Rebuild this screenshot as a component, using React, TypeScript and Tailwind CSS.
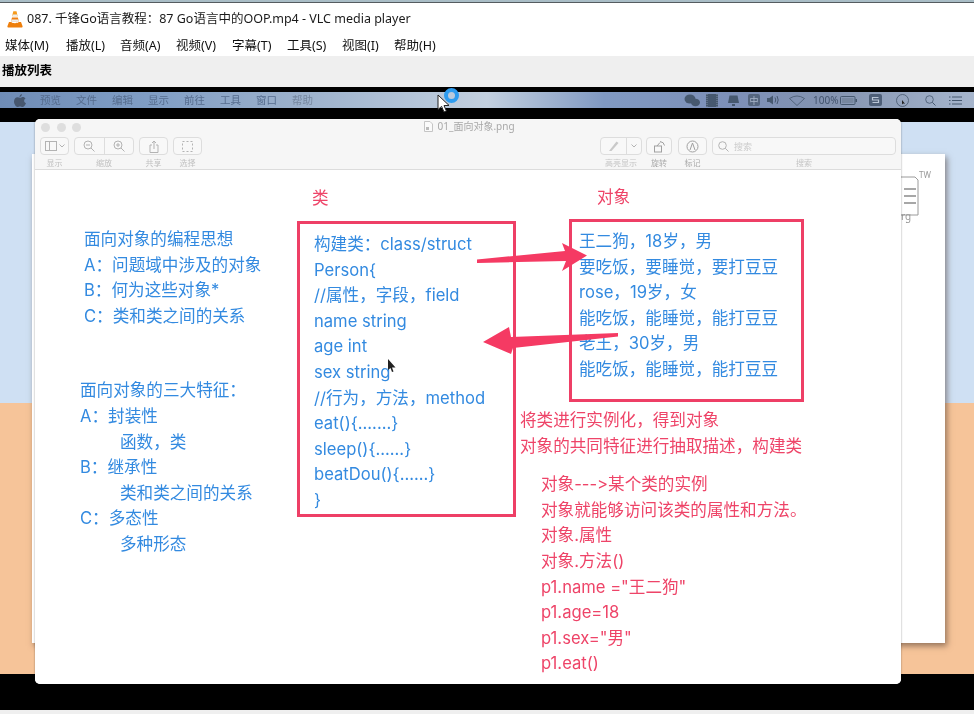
import React from "react";

const cjk = "font-['Inter','Noto_Sans_CJK_SC',sans-serif]";

function Cone() {
  return (
    <svg width="16" height="18" viewBox="0 0 16 18" className="shrink-0">
      <path d="M6.3 1.2 h3.2 l1.2 5 h-5.6z" fill="#f59a1c" />
      <path d="M5.7 4.6 h4.5 l.5 2 h-5.5z" fill="#eeeeee" />
      <path d="M5 7.4 h5.9 l1 4.2 H4z" fill="#f07f10" />
      <path d="M4.6 9.4 h6.7 l.6 2.4 H4z" fill="#eeeeee" />
      <path d="M2 12 h2.2 c1 1.6 6.4 1.6 7.6 0 H14 l1.6 4.2 c0 1-.4 1.3-1.2 1.3 H1.6 c-.8 0-1.2-.3-1.2-1.3z" fill="#ee7f0c" />
    </svg>
  );
}

function Cursor() {
  return (
    <svg width="14" height="20" viewBox="0 0 14 20" className="absolute left-[437px] top-[7px] z-20">
      <path d="M1 1 L1 15.5 L4.6 12.4 L7 18 L9.4 17 L7 11.6 L12 11.4 Z" fill="#fff" stroke="#222" strokeWidth="1" />
    </svg>
  );
}

function MacIcons() {
  const c = "#46586f";
  return (
    <div className="flex items-center">
      <svg width="16" height="13" viewBox="0 0 16 13" className="ml-0"><ellipse cx="6" cy="5" rx="5.5" ry="4.5" fill={c} /><ellipse cx="11.5" cy="8.5" rx="4.5" ry="3.8" fill={c} /></svg>
      <svg width="12" height="13" viewBox="0 0 12 13" className="ml-[6px]"><rect width="12" height="13" fill={c} /><path d="M1 0v13M11 0v13" stroke="#7d8ca5" strokeDasharray="1 1" /></svg>
      <svg width="13" height="12" viewBox="0 0 13 12" className="ml-[9px]"><path d="M1 9 L2.5 1.5 h8 L12 9z" fill={c} /><rect x="5" y="10" width="3" height="2" fill={c} /></svg>
      <span className="ml-[8px] flex h-[12px] w-[12px] items-center justify-center rounded-[2px] bg-[#55667f] text-[9px] leading-none text-[#a9b6ca]">中</span>
      <svg width="12" height="10" viewBox="0 0 12 10" className="ml-[7px]"><path d="M0 3h2.5L6 .5v9L2.5 7H0z" fill={c} /><path d="M8 2.5q1.5 2.5 0 5M10 1q2.4 4 0 8" stroke={c} fill="none" /></svg>
      <svg width="16" height="11" viewBox="0 0 16 11" className="ml-[10px]"><path d="M.5 3.5 Q8-1.5 15.5 3.5 L8 10.5z" fill="none" stroke={c} strokeWidth=".8" /></svg>
      <span className="ml-[8px] w-[24px] text-[10px] leading-none text-[#42536d]">100%</span>
      <svg width="17" height="9" viewBox="0 0 17 9" className="ml-[3px]"><rect x=".5" y=".5" width="14.5" height="8" rx="1" fill="none" stroke={c} /><rect x="15.5" y="3" width="1.5" height="3" fill={c} /><rect x="2" y="2" width="11.5" height="5" fill="#77879f" /></svg>
      <svg width="13" height="12" viewBox="0 0 13 12" className="ml-[12px]"><rect width="13" height="12" rx="2" fill="#4e5f78" /><path d="M9.5 3.5h-6v2.5h6v2.5h-6" stroke="#b9c5d6" strokeWidth="1.2" fill="none" /></svg>
      <svg width="13" height="13" viewBox="0 0 13 13" className="ml-[14px]"><circle cx="6.5" cy="6.5" r="6" fill="none" stroke={c} strokeWidth=".8" /><path d="M6 6 v4.5 l1-1 2 .2z" fill="#222" /></svg>
      <svg width="11" height="11" viewBox="0 0 11 11" className="ml-[16px]"><circle cx="4.5" cy="4.5" r="3.8" fill="none" stroke={c} strokeWidth=".8" /><path d="M7.3 7.3 L10.5 10.5" stroke={c} /></svg>
      <svg width="13" height="9" viewBox="0 0 13 9" className="ml-[13px]"><path d="M3 1h10M3 4.500h10M3 8h10" stroke={c} /><path d="M0 1h1.500M0 4.500h1.500M0 8h1.500" stroke={c} /></svg>
    </div>
  );
}

function Tool({ w, children }: { w: string; children: React.ReactNode }) {
  return (
    <div className={`flex h-[18px] items-center justify-center rounded-[4px] border border-[#dddddd] bg-[#f8f8f8] ${w}`}>
      {children}
    </div>
  );
}

const s = { fill: "none", stroke: "#b3b3b3", strokeWidth: 1 };

function Toolbar() {
  return (
    <div className="relative h-[51px] shrink-0 border-b border-[#dcdcdc] bg-[#f6f6f6]">
      <div className="flex h-[13px] items-end gap-[6.500px] pl-[6px]">
        <span className="h-[9px] w-[9px] rounded-full bg-[#dedede]" />
        <span className="h-[9px] w-[9px] rounded-full bg-[#dedede]" />
        <span className="h-[9px] w-[9px] rounded-full bg-[#dedede]" />
        <div className="ml-[336px] flex items-center gap-[5px]">
          <svg width="9" height="11" viewBox="0 0 9 11"><path d="M.5.5h5.500l2.500 2.500v7.500h-8z" fill="#fafafa" stroke="#c5c5c5" /><rect x="2" y="6" width="3" height="3" fill="#bbbbbb" /></svg>
          <span className="text-[10px] leading-[11px] text-[#a8a8a8]">01_面向对象.png</span>
        </div>
      </div>
      <div className="flex pt-[5px]">
        <div className="ml-[5px] flex flex-col">
          <div className="flex gap-[5px] pt-[0px]">
            <Tool w="w-[29px] gap-[2px]">
              <svg width="12" height="10" viewBox="0 0 12 10"><rect x=".5" y=".5" width="11" height="9" {...s} /><path d="M4.500.5v9" {...s} /></svg>
              <svg width="6" height="4" viewBox="0 0 6 4"><path d="M.5.5 3 3 5.500.5" {...s} /></svg>
            </Tool>
            <div className="flex h-[18px] w-[60px] rounded-[4px] border border-[#dddddd] bg-[#f8f8f8]">
              <div className="flex flex-1 items-center justify-center border-r border-[#dddddd]">
                <svg width="12" height="12" viewBox="0 0 12 12"><circle cx="5" cy="5" r="4" {...s} /><path d="M8 8l3.500 3.500M3 5h4" {...s} /></svg>
              </div>
              <div className="flex flex-1 items-center justify-center">
                <svg width="12" height="12" viewBox="0 0 12 12"><circle cx="5" cy="5" r="4" {...s} /><path d="M8 8l3.500 3.500M3 5h4M5 3v4" {...s} /></svg>
              </div>
            </div>
            <Tool w="w-[29px]">
              <svg width="10" height="13" viewBox="0 0 10 13"><path d="M3 5H1v7.500h8V5H7M5 9V1M3 3l2-2 2 2" {...s} /></svg>
            </Tool>
            <Tool w="w-[29px]">
              <svg width="11" height="11" viewBox="0 0 11 11"><rect x=".5" y=".5" width="10" height="10" {...s} strokeDasharray="2 2" /></svg>
            </Tool>
          </div>
          <div className="flex gap-[5px] pt-[2px] text-center text-[8px] leading-[12px] text-[#c0c0c0]">
            <span className="w-[29px]">显示</span>
            <span className="w-[60px]">缩放</span>
            <span className="w-[29px]">共享</span>
            <span className="w-[29px]">选择</span>
          </div>
        </div>
        <div className="ml-[398px] flex flex-col">
          <div className="flex">
            <div className="flex h-[18px] w-[42px] rounded-[4px] border border-[#dddddd] bg-[#f8f8f8]">
              <div className="flex w-[26px] items-center justify-center border-r border-[#dddddd]">
                <svg width="12" height="12" viewBox="0 0 12 12"><path d="M1 11 L8.500 1.500 L10.500 3 L3.500 11z" fill="#c9c9c9" /></svg>
              </div>
              <div className="flex flex-1 items-center justify-center">
                <svg width="6" height="4" viewBox="0 0 6 4"><path d="M.5.5 3 3 5.500.5" {...s} /></svg>
              </div>
            </div>
            <div className="ml-[4px]">
              <Tool w="w-[26px]">
                <svg width="13" height="13" viewBox="0 0 13 13"><rect x="1.500" y="6" width="7" height="6" fill="none" stroke="#a0a0a0" /><path d="M4 6 L7 2.500M7 1.500q4 .5 4.500 4" fill="none" stroke="#a0a0a0" /></svg>
              </Tool>
            </div>
            <div className="ml-[6px]">
              <Tool w="w-[29px]">
                <svg width="13" height="13" viewBox="0 0 13 13"><circle cx="6.500" cy="6.500" r="5.500" fill="none" stroke="#a0a0a0" /><path d="M4 10 L6.500 3 L9 10" fill="none" stroke="#a0a0a0" /></svg>
              </Tool>
            </div>
            <div className="ml-[5px] flex h-[18px] w-[184px] items-center gap-[5px] rounded-[4px] border border-[#dddddd] bg-[#f8f8f8] pl-[5px]">
              <svg width="11" height="11" viewBox="0 0 11 11"><circle cx="4.500" cy="4.500" r="3.800" {...s} /><path d="M7.300 7.300l3.200 3.200" {...s} /></svg>
              <span className="text-[9px] leading-none text-[#cccccc]">搜索</span>
            </div>
          </div>
          <div className="flex pt-[2px] text-center text-[8px] leading-[12px] text-[#c4c4c4]">
            <span className="w-[42px]">高亮显示</span>
            <span className="ml-[4px] w-[26px] text-[#aaaaaa]">旋转</span>
            <span className="ml-[6px] w-[29px] text-[#aaaaaa]">标记</span>
            <span className="ml-[5px] w-[184px]">搜索</span>
          </div>
        </div>
      </div>
    </div>
  );
}

function Lines({ items, className = "" }: { items: React.ReactNode[]; className?: string }) {
  return (
    <div className={`whitespace-pre text-[16.6px] leading-[25.6px] ${className}`}>
      {items.map((t, i) => (
        <div key={i}>{t}</div>
      ))}
    </div>
  );
}

function Canvas() {
  return (
    <div className={`relative flex flex-1 bg-white [font-feature-settings:'calt'_0,'liga'_0] ${cjk}`}>
      <div className="ml-[45px] mt-[57px] w-[217px] text-[#338ae0]">
        <Lines
          className="ml-[4px]"
          items={["面向对象的编程思想", "A：问题域中涉及的对象", "B：何为这些对象*", "C：类和类之间的关系"]}
        />
        <Lines
          className="mt-[49px]"
          items={[
            "面向对象的三大特征：",
            "A：封装性",
            <span className="pl-[40px]">函数，类</span>,
            "B：继承性",
            <span className="pl-[40px]">类和类之间的关系</span>,
            "C：多态性",
            <span className="pl-[40px]">多种形态</span>,
          ]}
        />
      </div>
      <div className="w-[272px]">
        <div className="ml-[15px] mt-[17px] text-[16.6px] leading-[22px] text-[#ee4468]">类</div>
        <div className="mt-[12px] h-[296px] w-[219px] border-[3px] border-[#ee3f66] pl-[14px] pt-[8px] text-[#338ae0]">
          <Lines
            items={["构建类：class/struct", "Person{", "//属性，字段，field", "name string", "age int", "sex string", "//行为，方法，method", "eat(){.......}", "sleep(){......}", "beatDou(){......}", "}"]}
          />
        </div>
      </div>
      <div>
        <div className="ml-[28px] mt-[16px] text-[16.6px] leading-[22px] text-[#ee4468]">对象</div>
        <div className="mt-[11px] h-[183px] w-[235px] border-[3px] border-[#ee3f66] pl-[7px] pt-[7px] text-[#338ae0]">
          <Lines
            items={["王二狗，18岁，男", "要吃饭，要睡觉，要打豆豆", "rose，19岁，女", "能吃饭，能睡觉，能打豆豆", "老王，30岁，男", "能吃饭，能睡觉，能打豆豆"]}
          />
        </div>
        <div className="-ml-[49px] mt-[6px] text-[#ee4468]">
          <Lines items={["将类进行实例化，得到对象", "对象的共同特征进行抽取描述，构建类"]} />
          <Lines
            className="ml-[21px] mt-[13px]"
            items={["对象--->某个类的实例", "对象就能够访问该类的属性和方法。", "对象.属性", "对象.方法()", 'p1.name ="王二狗"', "p1.age=18", 'p1.sex="男"', "p1.eat()"]}
          />
        </div>
      </div>
      <svg className="absolute inset-0" width="866" height="513" viewBox="35 171 866 513">
        <polygon points="477,260.500 565,252 562,244 587,256.500 562,272 566,262 477,264" fill="#f53a63" />
        <polygon points="618,334 618,337.500 513,349 511,355 483,343 509,328 511,338" fill="#f53a63" />
        <path d="M388 360 L388 371 L390.500 369 L392 373 L393.500 372.400 L392 368.500 L395.500 368.500 Z" fill="#222222" />
      </svg>
    </div>
  );
}

export default function App() {
  return (
    <div className="flex h-[714px] w-[974px] flex-col overflow-hidden bg-white font-['Noto_Sans','Noto_Sans_CJK_SC',sans-serif] blur-[0.45px]">
      <div className="h-[3px] shrink-0 border-b border-[#555c60] bg-[#a9bdc6]" />
      <div className="flex h-[25px] shrink-0 items-center gap-[4px] pl-[7px] pt-[7px] text-[12.500px] leading-none text-[#1a1a1a]">
        <Cone />
        <span>087. 千锋Go语言教程：87 Go语言中的OOP.mp4 - VLC media player</span>
      </div>
      <div className="flex h-[28px] shrink-0 items-center pl-[5px] pt-[8px] text-[12.500px] leading-none text-[#111111]">
        <span className="w-[61px]">媒体(M)</span>
        <span className="w-[54px]">播放(L)</span>
        <span className="w-[56px]">音频(A)</span>
        <span className="w-[56px]">视频(V)</span>
        <span className="w-[55px]">字幕(T)</span>
        <span className="w-[55px]">工具(S)</span>
        <span className="w-[52px]">视图(I)</span>
        <span>帮助(H)</span>
      </div>
      <div className="flex h-[31px] shrink-0 items-center bg-[#efefef] pl-[2px] text-[12.500px] font-bold leading-none text-black">播放列表</div>
      <div className="relative flex flex-1 flex-col bg-black pt-[5px]">
        <Cursor />
        <span className="absolute left-[444px] top-[1px] z-10 h-[15px] w-[15px] rounded-full border-[4px] border-[#2d9cf0]" />
        <div className="flex h-[16px] shrink-0 items-center justify-between bg-[linear-gradient(90deg,#6f8cb6_0%,#7f9dc4_15%,#9bb0cb_30%,#bccbdc_47%,#c3d0df_50%,#8099c2_62%,#7d90b8_75%,#8393b0_85%,#a6b5cc_100%)] pl-[14px] pr-[12px]">
          <div className="flex items-center text-[10.500px] leading-none text-[#566d8e]">
            <svg width="12" height="13" viewBox="0 0 12 13" className="mr-[14px]">
              <path d="M8 0 C8 2 6.500 3 5.500 3 C5.500 1.500 6.500.300 8 0z M6 3.800 C7 3.800 7.700 3 9 3 C10 3 11 3.600 11.500 4.500 C9.500 5.500 9.800 8.500 12 9.200 C11 11.500 9.800 13 8.500 13 C7.500 13 7.200 12.400 6 12.400 C4.800 12.400 4.500 13 3.500 13 C2 13 0 10 0 7.500 C0 4.800 1.800 3.300 3.500 3.300 C4.500 3.300 5.300 3.800 6 3.800z" fill="#47576f" />
            </svg>
            <span className="w-[36px]">预览</span>
            <span className="w-[36px]">文件</span>
            <span className="w-[36px]">编辑</span>
            <span className="w-[36px]">显示</span>
            <span className="w-[36px]">前往</span>
            <span className="w-[36px]">工具</span>
            <span className="w-[36px]">窗口</span>
            <span className="text-[#76879f]">帮助</span>
          </div>
          <MacIcons />
        </div>
        <div className="h-[14px] shrink-0" />
        <div className="relative flex flex-1 flex-col">
          <div className="h-[281px] bg-[#cfe0f3]" />
          <div className="flex-1 bg-[#f6c499]" />
          <div className="absolute left-[32px] top-[32px] h-[489px] w-[913px] bg-white shadow-[2px_3px_6px_rgba(70,50,40,0.55)]">
            <svg width="18" height="46" viewBox="0 0 18 46" className="absolute left-[869px] top-[21px]">
              <path d="M0 2 H14 L17 5 V40 H0" fill="none" stroke="#9a9a9a" />
              <path d="M3 14 H15 M3 21 H15 M3 28 H15" stroke="#8a8a8a" strokeWidth="1.500" />
            </svg>
            <span className="absolute left-[887px] top-[17px] text-[8px] leading-none text-[#999999]">TW</span>
            <span className="absolute left-[869px] top-[57px] text-[10px] leading-none text-[#999999]">rg</span>
          </div>
          <div className="absolute left-[35px] top-[-3px] flex h-[565px] w-[866px] flex-col overflow-hidden rounded-[5px] bg-white shadow-[0_0_2px_rgba(0,0,0,0.45)]">
            <Toolbar />
            <Canvas />
          </div>
        </div>
        <div className="h-[36px] shrink-0" />
        <div className="z-10 h-[4px] shrink-0 bg-[#efefef]" />
      </div>
    </div>
  );
}
